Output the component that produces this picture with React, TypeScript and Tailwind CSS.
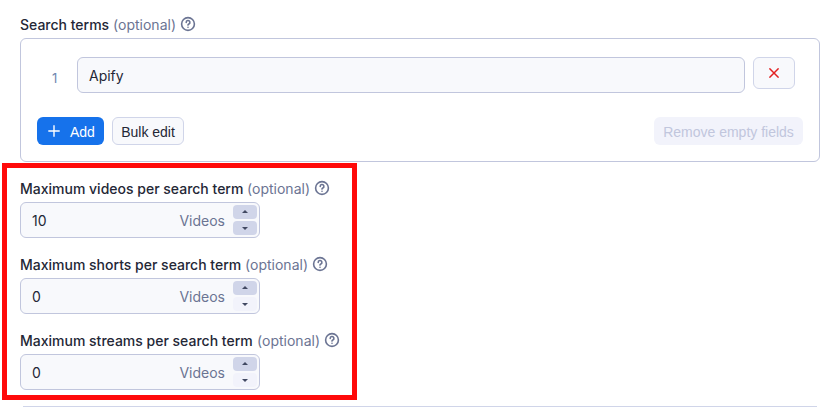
import React from "react";

function HelpIcon() {
  return (
    <svg width="16" height="16" viewBox="0 0 16 16" fill="none" stroke="#6b7493" strokeWidth="1.6" strokeLinecap="round" strokeLinejoin="round" className="relative -top-px ml-1 shrink-0">
      <circle cx="8" cy="8" r="6.4" />
      <path d="M6.2 6.4a1.85 1.85 0 1 1 2.7 1.6c-.6.3-.9.6-.9 1.1" />
      <path d="M8 11.3v.01" />
    </svg>
  );
}

function Label({ text, width }: { text: string; width: string }) {
  return (
    <div className="flex h-5 items-center">
      <div className={`flex justify-between whitespace-nowrap ${width}`}>
        <span className="font-medium">{text}</span>
        <span className="text-[#6b7493]">(optional)</span>
      </div>
      <HelpIcon />
    </div>
  );
}

function NumberField({ label, width, value, canDecrease }: { label: string; width: string; value: string; canDecrease: boolean }) {
  return (
    <div className="flex flex-col gap-[3px]">
      <Label text={label} width={width} />
      <div className="flex h-9 w-60 items-center rounded-md border border-[#c1c6dd] bg-[#f8f9fc] pr-[2px] pl-[11px]">
        <span className="pt-[2px]">{value}</span>
        <span className="mr-2 ml-auto pt-[2px] text-[#6b7493]">Videos</span>
        <div className="flex w-6 flex-col gap-[2px]">
          <button className="flex h-[14px] items-center justify-center rounded bg-[#d0d5e9] pb-px">
            <svg width="6" height="3" viewBox="0 0 6 3"><path d="M0 3 3 0l3 3Z" fill="#414962" /></svg>
          </button>
          <button className={`flex h-[14px] items-center justify-center rounded ${canDecrease ? "bg-[#d0d5e9]" : "bg-[#f2f3fb]"}`}>
            <svg width="6" height="3" viewBox="0 0 6 3"><path d="M0 0 3 3l3-3Z" fill="#414962" /></svg>
          </button>
        </div>
      </div>
    </div>
  );
}

export default function App() {
  return (
    <div className="relative h-[407px] w-[834px] overflow-hidden bg-white pt-[15px] pl-5 font-['Inter',sans-serif] text-sm leading-5 text-[#242736]">
      <Label text="Search terms" width="w-[156px]" />
      <section className="mt-[3px] flex h-[124px] w-[800px] flex-col justify-between rounded-md border border-[#c1c6dd] px-4 pt-[18px] pb-4">
        <div className="flex items-start">
          <span className="mt-[11px] w-10 pl-[15px] text-[13px] leading-5 text-[#6f86b0]">1</span>
          <div className="flex h-9 w-[668px] items-center rounded-md border border-[#c1c6dd] bg-[#f8f9fc] px-[11px] pt-[2px]">Apify</div>
          <button className="ml-2 flex h-8 w-[42px] items-center justify-center rounded-md border border-[#d0d5e9] bg-[#f8f9fc]">
            <svg width="10" height="10" viewBox="0 0 10 10" stroke="#e32222" strokeWidth="1.5"><path d="m.4.4 9.2 9.2M9.6.4.4 9.6" /></svg>
          </button>
        </div>
        <div className="flex h-7 font-['Liberation_Sans',sans-serif]">
          <button className="flex w-[67px] items-center gap-[10px] rounded-md bg-[#1672eb] pt-px pl-[11px] text-white">
            <svg width="12" height="12" viewBox="0 0 12 12" stroke="white" strokeWidth="1.4" className="relative -top-px"><path d="M6 .3v11.4M.3 6h11.4" /></svg>
            Add
          </button>
          <button className="ml-2 w-[72px] rounded-md border border-[#d0d5e9] bg-[#f8f9fc] pt-[2px] whitespace-nowrap">Bulk edit</button>
          <button className="ml-auto w-[149px] rounded-md bg-[#f2f3fb] pt-[2px] whitespace-nowrap text-[#c1c6dd]">Remove empty fields</button>
        </div>
      </section>
      <div className="mt-[17px] flex flex-col gap-[17px]">
        <NumberField label="Maximum videos per search term" width="w-[290px]" value="10" canDecrease />
        <NumberField label="Maximum shorts per search term" width="w-[288px]" value="0" canDecrease={false} />
        <NumberField label="Maximum streams per search term" width="w-[300px]" value="0" canDecrease={false} />
      </div>
      <div className="mt-4 ml-[3px] h-px w-[794px] bg-[#d0d5e9]" />
      <div className="absolute top-[163px] left-[2px] h-[237px] w-[355px] border-5 border-[#ff0a0a]" />
    </div>
  );
}
